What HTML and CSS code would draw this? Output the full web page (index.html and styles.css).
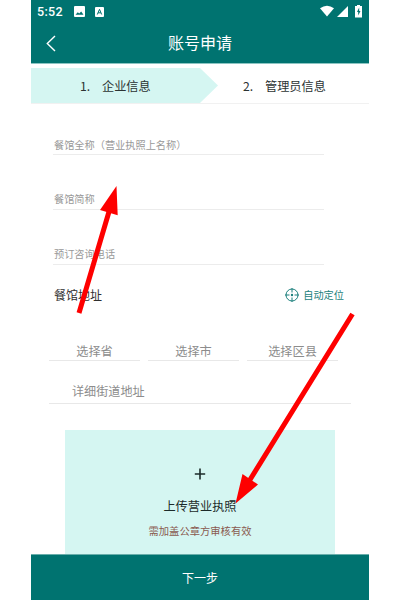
FILE: index.html
```html
<!DOCTYPE html>
<html lang="zh-CN">
<head>
    <meta charset="UTF-8">
    <meta name="viewport" content="width=device-width, initial-scale=1.0">
    <title>账号申请</title>
    <link rel="stylesheet" href="styles.css">
</head>
<body>
    <div class="phone">
        <header class="header">
            <div class="status-bar">
                <span class="time">5:52</span>
                <svg class="picture" width="11" height="11" viewBox="0 0 11 11">
                    <rect width="11" height="11" rx="1" fill="#fff"/>
                    <path d="M1.5 8.8 3.8 6.2 5.2 7.6 7.2 5.6 9.5 8.8Z" fill="#007370"/>
                </svg>
                <svg class="keyboard" width="9" height="10" viewBox="0 0 9 10">
                    <rect width="9" height="10" rx="1" fill="#fff"/>
                    <path d="M2.3 7.5 4.5 2.3 6.7 7.5M3.1 5.8H5.9" fill="none" stroke="#007370"/>
                </svg>
                <svg class="signals" width="43" height="13" viewBox="0 0 43 13">
                    <path d="M0 3.2Q7 -1.8 14 3.2L7 11.5Z" fill="#fff"/>
                    <path d="M28 1V12H17Z" fill="#fff"/>
                    <path d="M37 0H40V1H42V12.5H35V1H37Z" fill="#fff"/>
                    <path d="M39.2 2.5 37 7H38.2V10.5L40.5 6H39.2Z" fill="#007370"/>
                </svg>
            </div>
            <div class="title-bar">
                <svg class="back" width="10" height="17" viewBox="0 0 10 17">
                    <path d="M9 1 1.3 8.5 9 16" fill="none" stroke="#fff" stroke-width="1.4"/>
                </svg>
                <h1>账号申请</h1>
            </div>
        </header>

        <div class="steps">
            <div class="step active"><span class="num">1.</span>企业信息</div>
            <div class="step"><span class="num">2.</span>管理员信息</div>
        </div>

        <main class="form">
            <div class="field">餐馆全称（营业执照上名称）</div>
            <div class="field">餐馆简称</div>
            <div class="field">预订咨询电话</div>

            <div class="address-head">
                <span>餐馆地址</span>
                <span class="locate">
                    <svg width="14" height="14" viewBox="0 0 14 14" fill="none" stroke="#1b7f7c">
                        <circle cx="7" cy="7" r="6"/>
                        <path d="M7 0V4.5M7 9.5V14M0 7H4.5M9.5 7H14"/>
                        <circle cx="7" cy="7" r="1.2" fill="#1b7f7c" stroke="none"/>
                    </svg>
                    自动定位
                </span>
            </div>

            <div class="selects">
                <div class="select">选择省</div>
                <div class="select">选择市</div>
                <div class="select">选择区县</div>
            </div>
            <div class="street">详细街道地址</div>

            <div class="upload">
                <svg width="12" height="12" viewBox="0 0 12 12">
                    <path d="M6 .5V11.5M.8 6H11.2" stroke="#1c2b2a" stroke-width="1.6"/>
                </svg>
                <div class="upload-title">上传营业执照</div>
                <div class="upload-note">需加盖公章方审核有效</div>
            </div>
        </main>

        <footer class="next">下一步</footer>
    </div>

    <!-- pointers to the name field and the licence upload -->
    <svg class="arrows" width="400" height="600" viewBox="0 0 400 600" fill="#fe0000" stroke="#fe0000">
        <path d="M79 313 109.5 210M352.5 314 248 483" stroke-width="5"/>
        <path d="M116.5 186 117.7 215.3 100 210ZM235.5 503.5 242.5 474 258 484.5Z" stroke="none"/>
    </svg>
</body>
</html>
```
FILE: styles.css
```css
* { box-sizing: border-box; }
body {
    margin: 0;
    height: 600px;
    position: relative;
    overflow: hidden;
    background: #fff;
    font-family: "Noto Sans CJK SC", sans-serif;
}
.phone {
    width: 338px;
    height: 600px;
    margin: 0 auto;
    display: flex;
    flex-direction: column;
}
.header {
    height: 64px;
    flex: none;
    background: #007370;
    border-bottom: 1px solid #8cc5c2;
    color: #fff;
}
.status-bar {
    display: flex;
    align-items: center;
    height: 23px;
    padding: 0 6px;
}
.time {
    width: 37px;
    font: 500 12.5px Roboto, sans-serif;
    letter-spacing: 0.3px;
}
.keyboard { margin-left: 10px; }
.signals { margin-left: auto; }
.title-bar {
    display: flex;
    align-items: center;
    height: 40px;
    padding: 0 15px;
}
h1 {
    flex: 1;
    margin: 0 10px 2px 0;
    text-align: center;
    font-size: 16px;
    font-weight: 400;
    line-height: 20px;
}
.steps {
    display: flex;
    flex: none;
    height: 40px;
    padding-top: 4px;
    border-bottom: 1px solid #f1f1f1;
}
.step {
    flex: 1;
    padding-left: 25px;
    color: #2c3333;
    font-size: 12.2px;
    line-height: 36px;
}
.step.active {
    flex: none;
    width: 187px;
    padding-left: 49px;
    background: #d5f6f2;
    clip-path: polygon(0 0, 169px 0, 100% 50%, 169px 100%, 0 100%);
}
.num {
    display: inline-block;
    width: 22px;
}
.form {
    flex: 1;
    min-height: 0;
    overflow: hidden;
    display: flex;
    flex-direction: column;
}
.field {
    flex: none;
    width: 271px;
    height: 55px;
    margin-left: 22px;
    padding: 38px 0 0 1px;
    border-bottom: 1px solid #ececec;
    color: #999;
    font-size: 10.2px;
    line-height: 12px;
}
.field:first-child { height: 51px; padding-top: 35px; }
.address-head {
    flex: none;
    display: flex;
    justify-content: space-between;
    align-items: center;
    height: 60px;
    padding: 0 25px 1px 23px;
    color: #2f2f2f;
    font-size: 12px;
}
.locate {
    display: flex;
    align-items: center;
    gap: 4px;
    color: #1b7f7c;
    font-size: 10.2px;
    line-height: 14px;
}
.selects {
    flex: none;
    display: flex;
    gap: 8px;
    margin: 0 31px 0 18px;
    padding-top: 17px;
}
.select {
    flex: 1;
    height: 19px;
    border-bottom: 1px solid #e8e8e8;
    color: #8c8c8c;
    font-size: 12.2px;
    line-height: 18px;
    text-align: center;
}
.street {
    flex: none;
    height: 43px;
    margin: 0 18px;
    padding: 21px 0 0 23px;
    border-bottom: 1px solid #e8e8e8;
    color: #8c8c8c;
    font-size: 12.1px;
    line-height: 18px;
}
.upload {
    flex: 1;
    display: flex;
    flex-direction: column;
    align-items: center;
    margin: 26px 34px 0;
    padding-top: 38px;
    background: #d5f6f2;
}
.upload-title {
    margin-top: 17px;
    color: #1c2b2a;
    font-size: 12.2px;
    line-height: 18px;
}
.upload-note {
    margin-top: 8px;
    color: #8a5a50;
    font-size: 10.3px;
    line-height: 16px;
}
.next {
    flex: none;
    height: 46px;
    background: #007370;
    border-top: 1px solid #69aeab;
    color: #fff;
    font-size: 12px;
    line-height: 45px;
    text-align: center;
}
.arrows {
    position: absolute;
    top: 0;
    left: 0;
}
```
